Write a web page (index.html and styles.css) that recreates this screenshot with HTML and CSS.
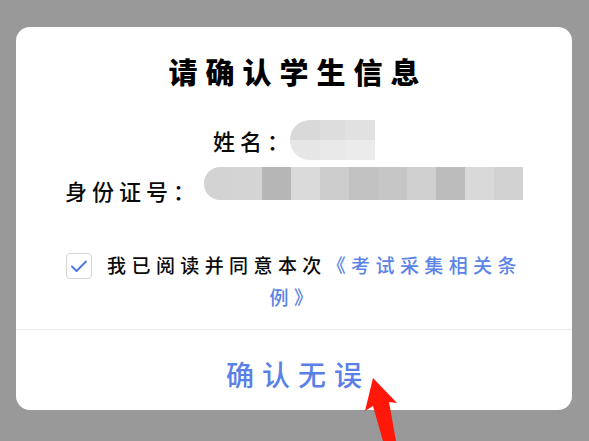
FILE: index.html
```html
<!DOCTYPE html>
<html lang="zh-CN">
<head>
  <meta charset="UTF-8">
  <title>请确认学生信息</title>
  <link rel="stylesheet" href="styles.css">
</head>
<body>

  <!-- 确认弹窗 -->
  <div class="dialog">
    <div class="dialog-body">
      <h2 class="title">请确认学生信息</h2>

      <div class="row">
        <span class="label">姓名：</span>
        <span class="mask mask-name"></span>
      </div>

      <div class="row">
        <span class="label">身份证号：</span>
        <span class="mask mask-id">
          <i></i><i></i><i></i><i></i><i></i><i></i><i></i><i></i><i></i><i></i><i></i>
        </span>
      </div>

      <p class="agree">
        <span class="checkbox">
          <svg width="26" height="26" viewBox="0 0 26 26">
            <path d="M6 13.5 L10.5 18 L20 8.5" fill="none" stroke="#4a7be6" stroke-width="2" stroke-linecap="round" stroke-linejoin="round"/>
          </svg>
        </span>我已阅读并同意本次<a class="link">《考试采集相关条例》</a>
      </p>
    </div>

    <div class="dialog-footer">
      <button class="confirm">确认无误</button>
    </div>
  </div>

  <!-- 红色箭头 -->
  <svg class="arrow" width="589" height="441" viewBox="0 0 589 441">
    <polygon points="373,378 397,403 389,402 396,441 383,441 373,406 365,411" fill="#ff170a"/>
  </svg>

</body>
</html>
```

FILE: styles.css
```css
body {
  margin: 0;
  background-color: #999999;
  font-family: "Noto Sans CJK SC", "Noto Sans", sans-serif;
  color: #111;
}

/* 弹窗 */
.dialog {
  margin: 27px 17px 0 16px;
  height: 383px;
  background-color: #fff;
  border-radius: 14px;
  display: flex;
  flex-direction: column;
}

.dialog-body {
  padding: 24px 44px 0;
  border-bottom: 1px solid #ececec;
}

.title {
  margin: 0 0 29px;
  font-size: 29px;
  line-height: 40px;
  font-weight: 900;
  letter-spacing: 8px;
  text-align: center;
  padding-left: 8px;
  color: #000;
}

.row {
  display: flex;
  justify-content: center;
  align-items: center;
  height: 40px;
  margin-bottom: 10px;
}

.label {
  font-size: 22px;
  font-weight: 500;
  letter-spacing: 5px;
  line-height: 40px;
  color: #0a0a0a;
}

/* 打码区域 */
.mask {
  display: flex;
}

.mask-name {
  width: 85px;
  height: 40px;
  margin-left: -4px;
  border-radius: 20px 0 0 20px;
  background:
    linear-gradient(180deg, rgba(255,255,255,0) 50%, rgba(255,255,255,0.35) 50%),
    linear-gradient(90deg, #d9d9d9 0 35%, #dddddd 35% 65%, #e1e1e1 65%);
}

.mask-id {
  height: 33px;
  margin-left: 4px;
  margin-bottom: 13px;
}

.mask-id i {
  width: 29px;
  height: 33px;
  background-color: #d0d0d0;
}

.mask-id i:nth-child(1) { border-radius: 16px 0 0 16px; background-color: #d3d3d3; }
.mask-id i:nth-child(2) { background-color: #d4d4d4; }
.mask-id i:nth-child(3) { background-color: #b6b6b6; }
.mask-id i:nth-child(4) { background-color: #dadada; }
.mask-id i:nth-child(5) { background-color: #cccccc; }
.mask-id i:nth-child(6) { background-color: #c2c2c2; }
.mask-id i:nth-child(7) { background-color: #c6c6c6; }
.mask-id i:nth-child(8) { background-color: #d0d0d0; }
.mask-id i:nth-child(9) { background-color: #bcbcbc; }
.mask-id i:nth-child(10) { background-color: #d9d9d9; }
.mask-id i:nth-child(11) { background-color: #d2d2d2; }

/* 同意条款 */
.agree {
  margin: 39px 0 16px;
  font-size: 19px;
  font-weight: 500;
  line-height: 32px;
  letter-spacing: 5.4px;
  text-align: center;
  color: #0a0a0a;
}

.checkbox {
  display: inline-block;
  width: 26px;
  height: 26px;
  box-sizing: border-box;
  border: 1px solid #d6d6d6;
  border-radius: 4px;
  margin-right: 15px;
  vertical-align: -6px;
  position: relative;
}

.checkbox svg {
  position: absolute;
  top: -1px;
  left: -1px;
}

.link {
  color: #5b84e6;
}

/* 底部按钮 */
.dialog-footer {
  flex: 1;
  display: flex;
  justify-content: center;
  padding-top: 24px;
}

.confirm {
  border: none;
  background: none;
  padding: 0 0 0 8px;
  height: 40px;
  font-family: inherit;
  font-size: 28px;
  font-weight: 500;
  line-height: 40px;
  letter-spacing: 8px;
  color: #5a7fe6;
}

.arrow {
  position: absolute;
  top: 0;
  left: 0;
  pointer-events: none;
}
```
